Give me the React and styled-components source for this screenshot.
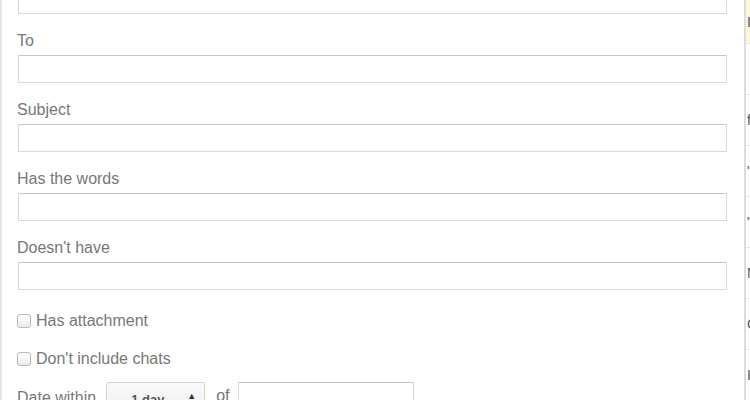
import React from 'react'
import styled, { createGlobalStyle } from 'styled-components'

const GlobalStyle = createGlobalStyle`
  html, body {
    margin: 0;
    padding: 0;
    background: #fff;
    overflow: hidden;
  }
  body {
    font-family: "Liberation Sans", Arial, sans-serif;
  }
`

const fields = ['To', 'Subject', 'Has the words', "Doesn't have"]
const options = ['Has attachment', "Don't include chats"]
const listRows = ['I', '', 'f', '"', '"', 'N', 'C', 'I', 'N']

function App() {
  return (
    <Page>
      <GlobalStyle />
      <Dialog>
        <Body>
          <TextBox type='text' />
          {fields.map((name) => (
            <Field key={name}>
              <Label>{name}</Label>
              <TextBox type='text' />
            </Field>
          ))}
          <Options>
            {options.map((name) => (
              <CheckRow key={name}>
                <Check type='checkbox' />
                <span>{name}</span>
              </CheckRow>
            ))}
          </Options>
          <DateRow>
            <span>Date within</span>
            <Select>
              <span>1 day</span>
              <Arrows>
                <span>▲</span>
                <span>▼</span>
              </Arrows>
            </Select>
            <span>of</span>
            <DateBox type='text' />
          </DateRow>
        </Body>
      </Dialog>
      <List>
        {listRows.map((t, i) => (
          <ListRow key={i} first={i === 0}>{t}</ListRow>
        ))}
      </List>
    </Page>
  )
}

const Page = styled.div`
  display: grid;
  grid-template-columns: 746px 1fr;
  height: 400px;
  overflow: hidden;
`

const Dialog = styled.div`
  background: #fff;
  border-left: 2px solid #e3e3e3;
  border-right: 2px solid #dcdcdc;
  height: 400px;
  overflow: hidden;
  position: relative;
  z-index: 1;
`

const Body = styled.div`
  margin-top: -14px;
  padding: 0 17px 0 16px;
  display: flex;
  flex-direction: column;
`

const Field = styled.div`
  display: flex;
  flex-direction: column;
  margin-top: 18px;
`

const Label = styled.label`
  font-size: 16px;
  line-height: 18px;
  color: #777;
  margin: 0 0 5px -1px;
`

const TextBox = styled.input`
  box-sizing: border-box;
  height: 28px;
  width: 100%;
  margin: 0;
  border: 1px solid #d9d9d9;
  border-top-color: #c7c7c7;
  border-radius: 1px;
  background: #fff;
  outline: none;
`

const Options = styled.div`
  display: flex;
  flex-direction: column;
  gap: 19px;
  margin-top: 21px;
`

const CheckRow = styled.label`
  display: flex;
  align-items: center;
  gap: 5px;
  margin-left: -1px;
  font-size: 16px;
  line-height: 19px;
  color: #777;
`

const Check = styled.input`
  appearance: none;
  box-sizing: border-box;
  width: 14px;
  height: 14px;
  margin: 0;
  border: 1px solid #b9b9b9;
  border-radius: 3px;
  background: linear-gradient(#fff, #ececec);
`

const DateRow = styled.div`
  display: flex;
  align-items: flex-start;
  margin: 14px 0 0 -1px;
  font-size: 16px;
  color: #777;

  & > span:first-child {
    margin: 7px 10px 0 0;
  }
  & > span:nth-child(3) {
    margin: 5px 8px 0 11px;
  }
`

const Select = styled.div`
  box-sizing: border-box;
  width: 99px;
  height: 30px;
  border: 1px solid #d3d3d3;
  border-radius: 2px;
  background: linear-gradient(#fafafa, #eeeeee);
  display: flex;
  align-items: flex-start;
  justify-content: space-between;
  padding: 9px 8px 0 24px;
  font-size: 13px;
  font-weight: bold;
  color: #555;
`

const Arrows = styled.span`
  display: flex;
  flex-direction: column;
  margin-top: -1px;
  font-size: 9px;
  line-height: 10px;
  color: #333;
`

const DateBox = styled(TextBox)`
  width: 176px;
  height: 29px;
`

const List = styled.div`
  display: flex;
  flex-direction: column;
  background: #fff;
  overflow: hidden;
`

const ListRow = styled.div`
  height: ${(p) => (p.first ? '43px' : '50px')};
  flex-shrink: 0;
  background: ${(p) => (p.first ? '#fbf9d6' : '#fff')};
  border-top: ${(p) => (p.first ? 'none' : '1px solid #e6e6e6')};
  padding-left: 1px;
  display: flex;
  align-items: center;
  font-size: 14px;
  color: #555;
  white-space: nowrap;
`

export default App
